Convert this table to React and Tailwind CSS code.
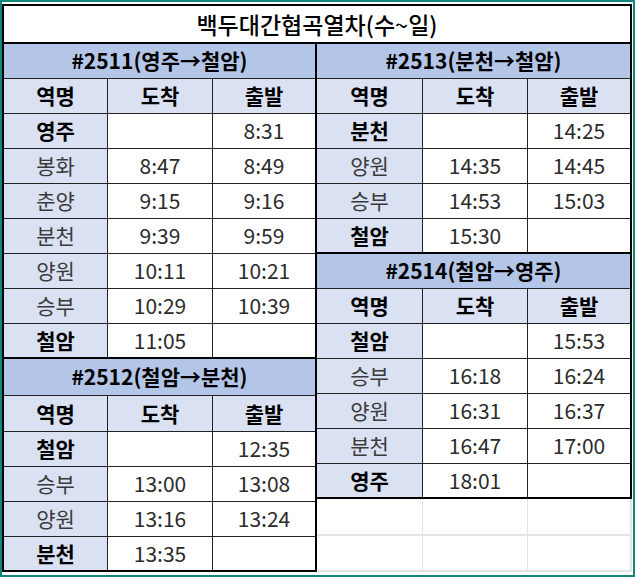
const trains = {
  t2511: {
    title: '#2511(영주→철암)',
    rows: [
      ['영주', '', '8:31', true],
      ['봉화', '8:47', '8:49'],
      ['춘양', '9:15', '9:16'],
      ['분천', '9:39', '9:59'],
      ['양원', '10:11', '10:21'],
      ['승부', '10:29', '10:39'],
      ['철암', '11:05', '', true],
    ],
  },
  t2512: {
    title: '#2512(철암→분천)',
    rows: [
      ['철암', '', '12:35', true],
      ['승부', '13:00', '13:08'],
      ['양원', '13:16', '13:24'],
      ['분천', '13:35', '', true],
    ],
  },
  t2513: {
    title: '#2513(분천→철암)',
    rows: [
      ['분천', '', '14:25', true],
      ['양원', '14:35', '14:45'],
      ['승부', '14:53', '15:03'],
      ['철암', '15:30', '', true],
    ],
  },
  t2514: {
    title: '#2514(철암→영주)',
    rows: [
      ['철암', '', '15:53', true],
      ['승부', '16:18', '16:24'],
      ['양원', '16:31', '16:37'],
      ['분천', '16:47', '17:00'],
      ['영주', '18:01', '', true],
    ],
  },
};

const colW = {
  left: ['w-[104px]', 'w-[105px]'],
  right: ['w-[106px]', 'w-[105px]'],
};

function Row({ side, h, cells, bg, bold, last }) {
  const [a, b] = colW[side];
  const border = last ? 'border-b-2 border-black' : 'border-b border-[#222]';
  return (
    <div className={`flex ${h} ${border}`}>
      <div className={`${a} shrink-0 border-r border-[#222] bg-[#d9e1f2] flex items-center justify-center ${bold ? 'font-bold text-black' : 'text-[#3a3a3a]'}`}>
        {cells[0]}
      </div>
      <div className={`${b} shrink-0 border-r border-[#222] flex items-center justify-center ${bg}`}>
        {cells[1]}
      </div>
      <div className={`flex-1 flex items-center justify-center ${bg}`}>{cells[2]}</div>
    </div>
  );
}

function Block({ train, side, headH = 'h-[35px]', colH = 'h-[35px]' }) {
  const [a, b] = colW[side];
  return (
    <div>
      <div className={`${headH} border-b border-[#222] bg-[#b4c6e7] flex items-center justify-center font-bold text-black`}>
        {train.title}
      </div>
      <div className={`flex ${colH} border-b border-[#222] bg-[#d9e1f2] font-bold text-black`}>
        <div className={`${a} shrink-0 border-r border-[#222] flex items-center justify-center`}>역명</div>
        <div className={`${b} shrink-0 border-r border-[#222] flex items-center justify-center`}>도착</div>
        <div className="flex-1 flex items-center justify-center">출발</div>
      </div>
      {train.rows.map((r, i) => (
        <Row
          key={i}
          side={side}
          h="h-[35px]"
          cells={r}
          bold={r[3]}
          bg="bg-white text-[#2b2b2b]"
          last={i === train.rows.length - 1}
        />
      ))}
    </div>
  );
}

function EmptyRow({ h }) {
  return (
    <div className={`flex ${h} border-b-2 border-[#e4e4e4]`}>
      <div className="w-[106px] shrink-0 border-r border-[#e4e4e4]" />
      <div className="w-[105px] shrink-0 border-r border-[#e4e4e4]" />
      <div className="flex-1 border-r-2 border-[#e4e4e4]" />
    </div>
  );
}

export default function App() {
  return (
    <div className="w-[635px] h-[577px] border-2 border-[#12867a] bg-white pt-[2px] font-['Noto_Sans_CJK_KR',sans-serif] text-[21px] overflow-hidden">
      <div className="w-[630px]">
        <div className="h-[40px] border-2 border-black flex items-center justify-center text-[23px] font-medium text-black">
          백두대간협곡열차(수~일)
        </div>
        <div className="flex">
          <div className="w-[315px] border-l-2 border-r-2 border-black">
            <Block train={trains.t2511} side="left" />
            <Block train={trains.t2512} side="left" headH="h-[37px]" colH="h-[36px]" />
          </div>
          <div className="w-[315px]">
            <div className="border-r-2 border-black">
              <Block train={trains.t2513} side="right" />
              <Block train={trains.t2514} side="right" />
            </div>
            <EmptyRow h="h-[37px]" />
            <EmptyRow h="h-[36px]" />
          </div>
        </div>
      </div>
    </div>
  );
}
